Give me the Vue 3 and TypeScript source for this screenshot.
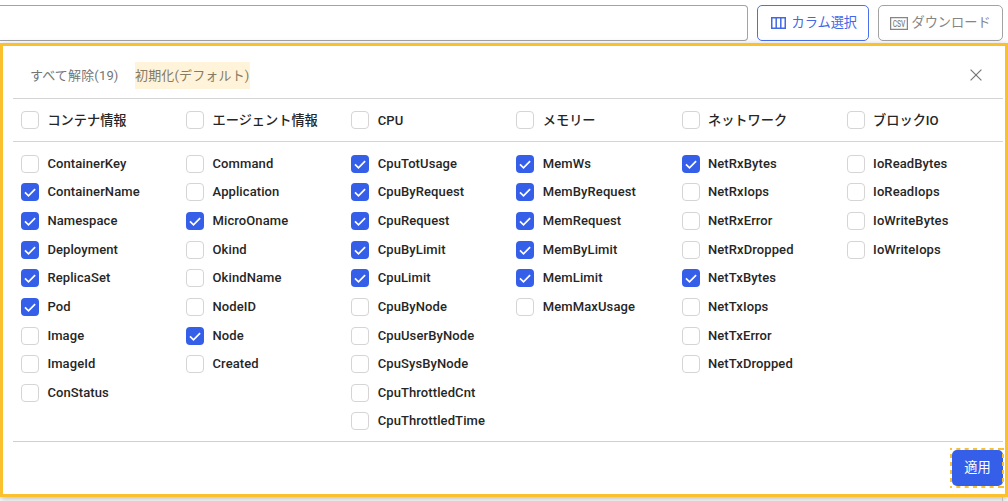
<script setup lang="ts">
import { ref } from 'vue'

interface Item { name: string; checked: boolean }
interface Group { title: string; cjk: boolean; items: Item[] }

const make = (title: string, cjk: boolean, names: string): Group => ({
  title,
  cjk,
  items: names.split(' ').map((n) => ({ name: n.replace('*', ''), checked: n.startsWith('*') })),
})

const groups = ref<Group[]>([
  make('コンテナ情報', true, 'ContainerKey *ContainerName *Namespace *Deployment *ReplicaSet *Pod Image ImageId ConStatus'),
  make('エージェント情報', true, 'Command Application *MicroOname Okind OkindName NodeID *Node Created'),
  make('CPU', false, '*CpuTotUsage *CpuByRequest *CpuRequest *CpuByLimit *CpuLimit CpuByNode CpuUserByNode CpuSysByNode CpuThrottledCnt CpuThrottledTime'),
  make('メモリー', true, '*MemWs *MemByRequest *MemRequest *MemByLimit *MemLimit MemMaxUsage'),
  make('ネットワーク', true, '*NetRxBytes NetRxIops NetRxError NetRxDropped *NetTxBytes NetTxIops NetTxError NetTxDropped'),
  make('ブロックIO', true, 'IoReadBytes IoReadIops IoWriteBytes IoWriteIops'),
])
</script>

<template>
  <div class="page">
    <header class="toolbar">
      <div class="search"></div>
      <button class="btn primary">
        <svg width="15" height="12" viewBox="0 0 15 12" fill="none" stroke="currentColor" stroke-width="1.5">
          <path d="M.75.75h13.5v10.5H.75zM5.2.7v10.6M9.8.7v10.6" />
        </svg>
        <span>カラム選択</span>
      </button>
      <button class="btn muted">
        <svg width="18" height="13" viewBox="0 0 18 13">
          <rect x=".6" y=".6" width="16.8" height="11.8" fill="none" stroke="currentColor" stroke-width="1.3" />
          <text x="9" y="9.7" text-anchor="middle" textLength="12.6" lengthAdjust="spacingAndGlyphs" class="csv">CSV</text>
        </svg>
        <span>ダウンロード</span>
      </button>
    </header>

    <section class="panel">
      <div class="actions">
        <span class="clear">すべて解除(19)</span>
        <span class="reset">初期化(デフォルト)</span>
        <svg class="close" width="12" height="12" viewBox="0 0 12 12" fill="none" stroke="currentColor" stroke-width="1.2">
          <path d="M.6.6l10.8 10.8M11.4.6L.6 11.4" />
        </svg>
      </div>
      <div class="heads">
        <label v-for="g in groups" :key="g.title" class="head">
          <span class="box"></span><span :class="['label', { cjk: g.cjk }]">{{ g.title }}</span>
        </label>
      </div>
      <div class="lists">
        <div v-for="g in groups" :key="g.title" class="list">
          <label v-for="i in g.items" :key="i.name" class="item" @click="i.checked = !i.checked">
            <span :class="['box', { on: i.checked }]">
              <svg v-if="i.checked" width="18" height="18" viewBox="0 0 18 18" fill="none" stroke="#fff" stroke-width="1.7">
                <path d="M4 9.4l3.5 3.4 6.6-6.7" />
              </svg>
            </span>
            <span class="label">{{ i.name }}</span>
          </label>
        </div>
      </div>
      <footer class="foot">
        <div class="mark">
          <button class="apply">適用</button>
          <svg class="dash" width="54" height="40" viewBox="0 0 54 40" fill="none" stroke="#fbc02d" stroke-width="2">
            <path d="M0 1h54M0 39h54" stroke-dasharray="4 4.33" stroke-dashoffset="2" />
            <path d="M1 0v40M53 0v40" stroke-dasharray="4 4" stroke-dashoffset="2" />
          </svg>
        </div>
      </footer>
    </section>
    <div class="below"></div>
  </div>
</template>

<style>
body { margin: 0; background: #fff; }
</style>

<style scoped>
* { box-sizing: border-box; }
.page {
  width: 1008px; height: 501px; overflow: hidden; display: flex; flex-direction: column;
  font-family: Roboto, "Noto Sans CJK JP", sans-serif; color: #262626;
}
.toolbar { display: flex; flex: none; height: 43px; padding: 5px 5px 0 0; }
.search { width: 748px; height: 36px; border: 1px solid #a3a3a3; border-left: 0; border-radius: 0 4px 4px 0; margin-right: 9px; }
.btn {
  height: 36px; display: flex; align-items: center; padding: 0 0 0 12.5px; border-radius: 5px;
  background: #fff; font: 400 13.2px/20px Roboto, "Noto Sans CJK JP", sans-serif; white-space: nowrap;
}
.btn svg { flex: none; }
.primary { width: 112px; border: 1px solid #4a70ec; color: #4268e8; margin-right: 9px; }
.primary svg { margin-right: 6px; }
.muted { width: 125px; border: 1px solid #a3a3a3; color: #858585; padding-left: 11px; }
.muted svg { margin-right: 3.5px; }
.csv { font: 500 8.6px Roboto, sans-serif; fill: currentColor; }
.panel {
  flex: none; height: 454px; border: 3px solid #fbc02d; background: #fff; padding: 0 2px 0 10px;
  display: flex; flex-direction: column; box-shadow: 0 2px 7px rgba(0, 0, 0, .28);
}
.actions {
  height: 53px; flex: none; border-bottom: 1px solid #d4d4d4; display: flex; align-items: center;
  padding: 6px 21px 0 17px; font-size: 13px; line-height: 27px; color: #757575;
}
.clear { width: 105px; letter-spacing: .15px; }
.reset { width: 115px; background: #fff3d9; color: #857b65; white-space: nowrap; letter-spacing: .15px; }
.close { margin-left: auto; color: #777; }
.heads { height: 43px; flex: none; border-bottom: 1px solid #d4d4d4; padding: 0 0 0 8px; display: grid; grid-template-columns: repeat(6, 165.15px); }
.heads .label { position: relative; top: .5px; }
.lists { height: 300px; flex: none; border-bottom: 1px solid #cfcfcf; padding: 7.25px 0 0 8px; display: grid; grid-template-columns: repeat(6, 165.15px); align-items: start; }
.head, .item { display: flex; align-items: center; white-space: nowrap; }
.item { height: 28.67px; }
.box { width: 18px; height: 18px; flex: none; border: 1px solid #d5d5d5; border-radius: 4px; margin-right: 8.4px; background: #fff; }
.box.on { border: 0; background: #355fe8; }
.box svg { display: block; }
.label { font-size: 13px; line-height: 18px; font-weight: 500; letter-spacing: .1px; }
.cjk { font-size: 13.2px; letter-spacing: 0; }
.foot { display: flex; justify-content: flex-end; padding-top: 6px; }
.mark { position: relative; width: 54px; height: 40px; padding: 2px; margin-right: -1px; }
.apply {
  display: block; width: 51px; height: 36px; border: 0; border-radius: 5px; padding: 0; background: #355fe8; color: #fff;
  font: 400 13.2px/36px Roboto, "Noto Sans CJK JP", sans-serif;
}
.dash { position: absolute; left: 0; top: 0; }
.below { width: 1003px; height: 4px; border-right: 1px solid #bbb; }
</style>
